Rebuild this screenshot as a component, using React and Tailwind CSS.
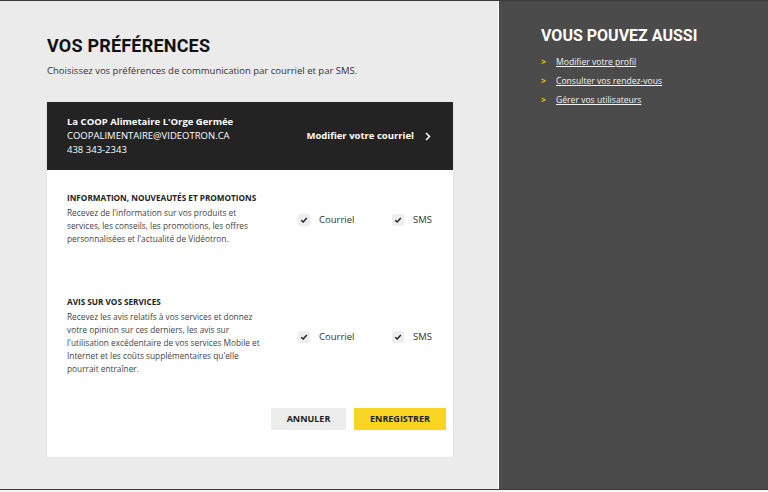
import React from "react";

const sans = { fontFamily: '"Open Sans", "Liberation Sans", sans-serif' };
const head = { fontFamily: 'Roboto, "Liberation Sans", sans-serif' };

function Check() {
  return (
    <span className="inline-flex items-center justify-center w-[12px] h-[12px] bg-[#eeeeee] rounded-[2px]">
      <svg width="8" height="8" viewBox="0 0 10 10">
        <path d="M1.5 5.2 L4 7.6 L8.5 2.4" fill="none" stroke="#222" strokeWidth="1.8" />
      </svg>
    </span>
  );
}

function Prefs() {
  return (
    <div className="flex items-center ml-auto mt-[3px] mr-[-1px]">
      <div className="flex items-center gap-[9px] w-[94px]">
        <Check />
        <span className="text-[9.5px] text-[#333]">Courriel</span>
      </div>
      <div className="flex items-center gap-[9px]">
        <Check />
        <span className="text-[9.5px] text-[#333]">SMS</span>
      </div>
    </div>
  );
}

export default function App() {
  return (
    <div className="w-[768px] h-[492px] flex flex-col bg-[#ebebeb] overflow-hidden" style={sans}>
      <div className="h-[1px] bg-[#3a3a3a]" />
      <div className="flex flex-1 min-h-0">
        <div className="w-[499px] border-r border-[#fafafa] bg-[#ebebeb] pl-[47px] pr-[45px] pt-[35px]">
          <h1 className="text-[18px] font-bold text-[#111] leading-[20px] tracking-[0.2px]" style={head}>
            VOS PRÉFÉRENCES
          </h1>
          <p className="text-[9.5px] text-[#333] mt-[8px] leading-[14px]">
            Choisissez vos préférences de communication par courriel et par SMS.
          </p>
          <div className="mt-[24px] bg-white shadow-[0_0_1px_rgba(0,0,0,0.15)]">
            <div className="bg-[#232323] h-[68px] flex items-center pl-[20px] pr-[22px] text-white">
              <div className="text-[9.5px] leading-[14px]">
                <div className="font-bold">La COOP Alimetaire L'Orge Germée</div>
                <div>COOPALIMENTAIRE@VIDEOTRON.CA</div>
                <div>438 343-2343</div>
              </div>
              <div className="ml-auto flex items-center gap-[11px] text-[9.5px] font-bold">
                <span>Modifier votre courriel</span>
                <svg width="6" height="9" viewBox="0 0 6 9">
                  <path d="M1 1 L4.5 4.5 L1 8" fill="none" stroke="#fff" strokeWidth="1.5" />
                </svg>
              </div>
            </div>
            <div className="pl-[20px] pr-[22px] pt-[22px]">
              <div className="flex items-center">
                <div className="w-[212px]">
                  <div className="text-[8.2px] font-bold text-[#222] leading-[12px]">
                    INFORMATION, NOUVEAUTÉS ET PROMOTIONS
                  </div>
                  <p className="text-[8.3px] text-[#444] leading-[13px] mt-[2px] whitespace-nowrap">
                    Recevez de l'information sur vos produits et
                    <br />
                    services, les conseils, les promotions, les offres
                    <br />
                    personnalisées et l'actualité de Vidéotron.
                  </p>
                </div>
                <Prefs />
              </div>
              <div className="flex items-center mt-[51px]">
                <div className="w-[212px]">
                  <div className="text-[8.2px] font-bold text-[#222] leading-[12px]">AVIS SUR VOS SERVICES</div>
                  <p className="text-[8.3px] text-[#444] leading-[13px] mt-[2px] whitespace-nowrap">
                    Recevez les avis relatifs à vos services et donnez
                    <br />
                    votre opinion sur ces derniers, les avis sur
                    <br />
                    l'utilisation excédentaire de vos services Mobile et
                    <br />
                    Internet et les coûts supplémentaires qu'elle
                    <br />
                    pourrait entraîner.
                  </p>
                </div>
                <Prefs />
              </div>
              <div className="flex justify-end gap-[8px] mt-[33px] pb-[27px] mr-[-15px]">
                <button className="w-[75px] h-[22px] bg-[#ededed] text-[9px] font-bold text-[#222]">ANNULER</button>
                <button className="w-[92px] h-[22px] bg-[#f8d523] text-[9px] font-bold text-[#222]">ENREGISTRER</button>
              </div>
            </div>
          </div>
        </div>
        <div className="flex-1 bg-[#4b4b4b] pl-[42px] pt-[25px]">
          <h2 className="text-[16px] font-bold text-white leading-[20px]" style={head}>VOUS POUVEZ AUSSI</h2>
          <ul className="mt-[9px] flex flex-col gap-[5px]">
            {["Modifier votre profil", "Consulter vos rendez-vous", "Gérer vos utilisateurs"].map((t) => (
              <li key={t} className="flex items-center h-[14px] text-[8.6px] text-[#f2f2f2]">
                <span className="w-[15px] text-[#f2c500] font-bold">&gt;</span>
                <span className="underline">{t}</span>
              </li>
            ))}
          </ul>
        </div>
      </div>
      <div className="h-[1px] bg-[#3a3a3a]" />
      <div className="h-[2px] bg-[#f5f5f5]" />
    </div>
  );
}
